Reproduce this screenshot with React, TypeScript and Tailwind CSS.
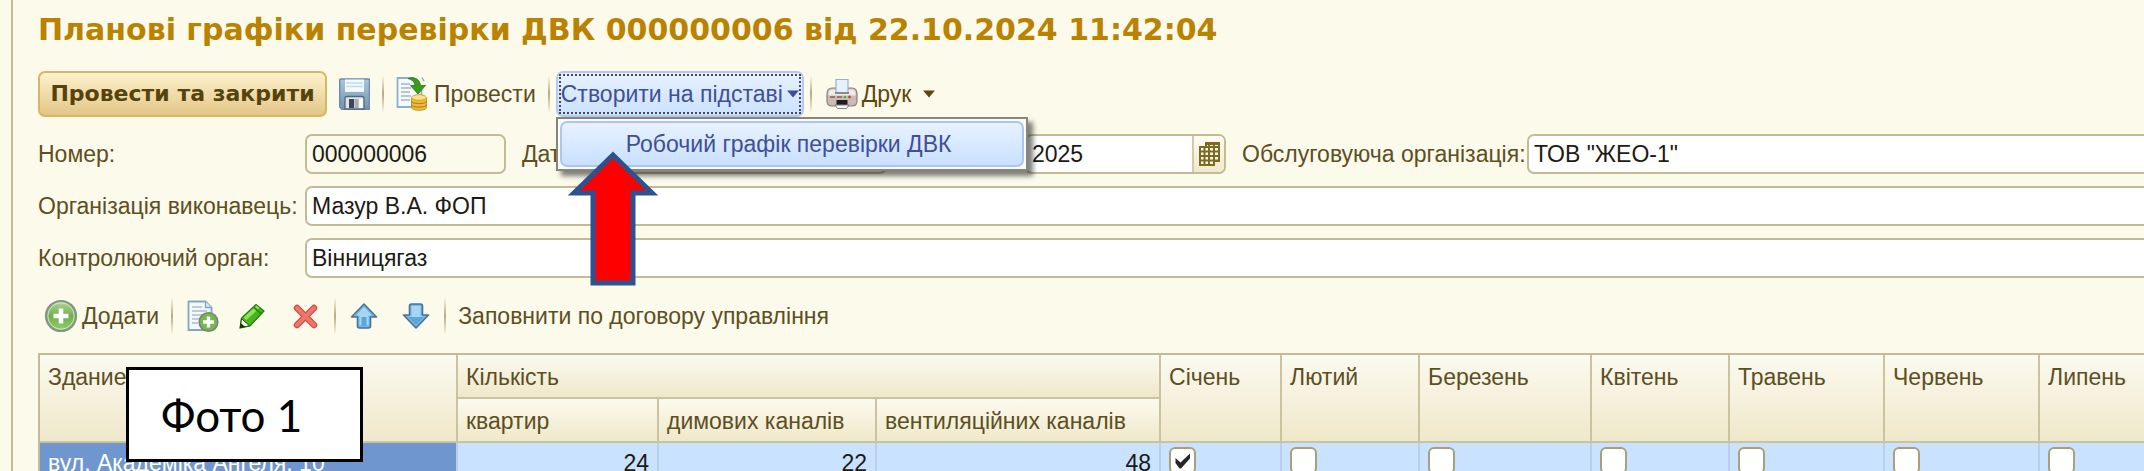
import { useState } from "react";

const months = ["Січень", "Лютий", "Березень", "Квітень", "Травень", "Червень", "Липень"];

const headCell = "border-r-2 border-b-2 border-[#cbc39f] bg-linear-to-b from-[#fbfaf0] to-[#f0e8ca] pt-2 pl-2 text-left align-top font-normal";
const field = "h-10 rounded-[7px] border-2 border-[#c3bb96] px-[5px] text-[#1c1a14] outline-none";

function Separator() {
  return <span className="h-[38px] w-0.5 bg-linear-to-b from-transparent via-[#b5ab84] to-transparent" />;
}

function Caret() {
  return (
    <svg className="h-2 w-3" viewBox="0 0 12 8" fill="currentColor" aria-hidden="true">
      <path d="M0 0.5h12L6 7.5z" />
    </svg>
  );
}

function SaveIcon() {
  return (
    <svg className="h-8 w-[31px]" viewBox="0 0 31 32" aria-hidden="true">
      <defs>
        <linearGradient id="save-body" x1="0" y1="0" x2="0" y2="1">
          <stop offset="0" stopColor="#a9c8df" />
          <stop offset="1" stopColor="#7292ad" />
        </linearGradient>
      </defs>
      <path d="M2 1h27.500q1 0 1 1v28.500q0 1-1 1H3L.7 29V2q0-1 1.300-1z" fill="url(#save-body)" stroke="#6c8aa5" strokeWidth="1.400" />
      <path d="M6 1.500h19V14H6z" fill="#f4fbfe" />
      <path d="M7 5h17M7 8.500h17" stroke="#b9dcf0" strokeWidth="1.500" />
      <path d="M5 14.500h21" stroke="#8fb0ca" strokeWidth="1.200" />
      <path d="M6 20.500q0-2 2-2h15q2 0 2 2V31H6z" fill="#dfe3e8" stroke="#53677c" strokeWidth="1.300" />
      <path d="M10 21h5v9h-5z" fill="#3c4654" />
      <path d="M15.500 21h4v9h-4z" fill="#a7adb5" />
      <path d="M20.500 21h3v9h-3z" fill="#fff" />
    </svg>
  );
}

function PostIcon() {
  return (
    <svg className="h-9 w-8" viewBox="0 0 32 36" aria-hidden="true">
      <path d="M18 2H1.500v29h24V14" fill="#f3f8fc" stroke="#8db0cd" strokeWidth="1.800" />
      <path d="M5 8h9M5 12h10M5 16h9M5 20h10M5 24h9" stroke="#a9b4c2" strokeWidth="1.500" />
      <path d="M26 1.500l2 4" stroke="#8db0cd" strokeWidth="1.500" />
      <path d="M12 2.500c6-1.800 11.500 0 12.500 7h5L22 18l-7.500-8.500h4.500c-.5-4-3-6-7-7z" fill="#3c9a1e" stroke="#27740f" strokeWidth=".8" />
      <path d="M15.500 22v9.500c0 3.800 15 3.800 15 0V22z" fill="#eebc3c" stroke="#bb8a1c" strokeWidth=".8" />
      <ellipse cx="23" cy="21.500" rx="7.500" ry="2.800" fill="#fbe28a" stroke="#c99726" strokeWidth=".8" />
      <path d="M15.500 25c0 3.400 15 3.400 15 0M15.500 28.500c0 3.400 15 3.400 15 0" fill="none" stroke="#b98619" strokeWidth="1.200" />
    </svg>
  );
}

function PrinterIcon() {
  return (
    <svg className="h-8 w-8" viewBox="0 0 32 32" aria-hidden="true">
      <path d="M1 16q0-6 5-6h20q5 0 5 6v7q0 5-5 5H6q-5 0-5-5z" fill="#c9bcb4" stroke="#8b807a" strokeWidth="1.200" />
      <path d="M2.500 15.500q0-4 4-4h19q4 0 4 4v2h-27z" fill="#f1ebe6" />
      <path d="M10 1.500h12V15H10z" fill="#e4f2fc" stroke="#96b3ca" strokeWidth="1.200" />
      <path d="M9 15h14" stroke="#77706c" strokeWidth="1.500" />
      <path d="M4 19h5M11 19h5" stroke="#9c7767" strokeWidth="2" />
      <circle cx="19" cy="19" r="1.300" fill="#3fae46" />
      <circle cx="23.500" cy="19" r="1.400" fill="#e23c30" />
      <path d="M10.500 22h11v5h-11z" fill="#211d1c" />
      <path d="M9 27h14l-2.500 3.500h-9z" fill="#fafafa" stroke="#85807d" strokeWidth="1" />
    </svg>
  );
}

function AddIcon() {
  return (
    <svg className="h-[34px] w-[34px]" viewBox="0 0 34 34" aria-hidden="true">
      <defs>
        <linearGradient id="add-ball" x1="0" y1="0" x2="0" y2="1">
          <stop offset="0" stopColor="#b5d79e" />
          <stop offset=".5" stopColor="#6fb04a" />
          <stop offset="1" stopColor="#95cd70" />
        </linearGradient>
      </defs>
      <circle cx="17" cy="17" r="15" fill="url(#add-ball)" stroke="#87948a" strokeWidth="2.200" />
      <circle cx="17" cy="17" r="13.200" fill="none" stroke="#cfe6c2" strokeWidth="1" />
      <path d="M17 9.500v15M9.500 17h15" stroke="#fff" strokeWidth="4.500" />
    </svg>
  );
}

function CopyIcon() {
  return (
    <svg className="h-[34px] w-8" viewBox="0 0 32 34" aria-hidden="true">
      <path d="M1.500 2.500h17l6 6V31h-23z" fill="#f2f8fd" stroke="#84a5c1" strokeWidth="1.800" />
      <path d="M18.500 2.500v6h6" fill="#d8e8f4" stroke="#84a5c1" strokeWidth="1.300" />
      <path d="M5 8h10M5 12h15M5 16h15M5 20h8M5 24h6" stroke="#aebdcb" strokeWidth="1.400" />
      <circle cx="21.500" cy="23" r="9.300" fill="#76b552" stroke="#75886f" strokeWidth="1.600" />
      <path d="M21.500 17.500v11M16 23h11" stroke="#fff" strokeWidth="3.400" />
    </svg>
  );
}

function PencilIcon() {
  return (
    <svg className="h-[26px] w-[26px]" viewBox="0 0 26 26" aria-hidden="true">
      <path d="M1 25l1.500-10L17 1.500 25 8 11 23z" fill="#46b51e" stroke="#23780a" strokeWidth="1.200" />
      <path d="M4.500 14.500L17.500 2.500l3 2.500L7.500 17z" fill="#8fe05e" />
      <path d="M14.500 4l8 7" stroke="#2c8a10" strokeWidth="1.800" />
      <path d="M1.300 24.700l1.200-9 8 7z" fill="#f5f7ec" stroke="#23570f" strokeWidth="1" />
      <path d="M1 25l.6-5 4.500 3.800z" fill="#15330c" />
    </svg>
  );
}

function DeleteIcon() {
  return (
    <svg className="h-[25px] w-[25px]" viewBox="0 0 25 25" aria-hidden="true">
      <path d="M4 4l17 17M21 4L4 21" stroke="#cf4a44" strokeWidth="6.500" strokeLinecap="round" />
      <path d="M4 4l17 17M21 4L4 21" stroke="#ee7768" strokeWidth="4" strokeLinecap="round" />
    </svg>
  );
}

function MoveUpIcon() {
  return (
    <svg className="h-[26px] w-7" viewBox="0 0 28 26" aria-hidden="true">
      <path d="M14 1l12.500 13h-6v9q0 2-2 2h-9q-2 0-2-2v-9h-6z" fill="#72b8e8" stroke="#4b7291" strokeWidth="1.600" strokeLinejoin="round" />
      <path d="M14 4l8 8.500h-3.500V22h-9v-9.500H6z" fill="#a5d6f6" />
      <path d="M11.500 14h5v9h-5z" fill="#5aa7de" />
    </svg>
  );
}

function MoveDownIcon() {
  return (
    <svg className="h-[26px] w-7" viewBox="0 0 28 26" aria-hidden="true">
      <path d="M14 25L1.500 12h6V3q0-2 2-2h9q2 0 2 2v9h6z" fill="#72b8e8" stroke="#4b7291" strokeWidth="1.600" strokeLinejoin="round" />
      <path d="M9.500 3h9v10.500H22L14 21 6 13.500h3.500z" fill="#a5d6f6" />
      <path d="M6 14h16l-8 8z" fill="#5aa7de" />
    </svg>
  );
}

function PickerIcon() {
  return (
    <svg className="h-6 w-[21px]" viewBox="0 0 21 24" aria-hidden="true">
      <path d="M7 1h13v18h-5v4H1V5h6z" fill="#fbf8e4" stroke="#7d6a22" strokeWidth="2" />
      <path d="M7 2h13M7 5h13M1 9.500h19M1 14h19M1 18.500h19M5.500 5v18M10 1v22M15 1v22" stroke="#7d6a22" strokeWidth="2" />
    </svg>
  );
}

export default function App() {
  const [checked, setChecked] = useState<string[]>(["Січень"]);

  const toggle = (month: string) =>
    setChecked((prev) => (prev.includes(month) ? prev.filter((m) => m !== month) : [...prev, month]));

  return (
    <div className="h-dvh overflow-hidden bg-[#fcfaeb] pl-[11px] font-['Liberation_Sans',Arial,sans-serif] text-[23px] leading-7 text-[#5c4f22]">
      <main className="min-h-full border-l-2 border-[#c3bb96] pl-[25px]">
        <h1 className="h-[71px] pt-2 font-['DejaVu_Sans',sans-serif] text-3xl leading-11 font-bold whitespace-nowrap text-[#b98200]">
          Планові графіки перевірки ДВК 000000006 від 22.10.2024 11:42:04
        </h1>

        <div className="flex h-[46px] items-center whitespace-nowrap">
          <button
            type="button"
            className="h-full w-[289px] rounded-[7px] border-2 border-[#d6b765] bg-linear-to-b from-[#fdf2cc] to-[#e3c687] font-['DejaVu_Sans',sans-serif] text-[22px] leading-7 font-bold text-[#55430e]"
          >
            Провести та закрити
          </button>
          <button type="button" aria-label="Записати" className="mx-3">
            <SaveIcon />
          </button>
          <Separator />
          <button type="button" className="mx-3 flex items-center gap-1.5">
            <PostIcon />
            Провести
          </button>
          <Separator />
          <div className="relative mx-1.5 h-full">
            <button
              type="button"
              aria-expanded="true"
              className="h-full w-[248px] rounded-[7px] border-2 border-[#b2c8f5] bg-linear-to-b from-[#e6f1ff] to-[#cbe2ff] p-px text-[#404f98]"
            >
              <span className="flex h-full items-center justify-between border-2 border-dotted border-[#4a4a4a]">
                Створити на підставі
                <Caret />
              </span>
            </button>
            <div
              role="menu"
              className="absolute top-full left-0 z-10 h-[54px] w-[472px] border-2 border-[#85857f] bg-[#fdfcf3] p-0.5 shadow-[5px_5px_5px_rgba(0,0,0,0.5)]"
            >
              <button
                type="button"
                role="menuitem"
                className="h-full w-full rounded-[7px] border-2 border-[#aec5f4] bg-linear-to-b from-[#e8f2ff] to-[#c9e0ff] pl-16 text-left text-[#404f98]"
              >
                Робочий графік перевірки ДВК
              </button>
            </div>
            <svg className="absolute top-20 left-3 z-20 h-[135px] w-[90px]" viewBox="0 0 90 135" aria-hidden="true">
              <path d="M45 4L84 42H65v90H25V42H6z" fill="#fe0000" stroke="#2f528f" strokeWidth="5" />
            </svg>
          </div>
          <Separator />
          <button type="button" className="ml-3.5 flex items-center gap-1 text-[#5c480c]">
            <PrinterIcon />
            Друк
            <span className="pl-2">
              <Caret />
            </span>
          </button>
        </div>

        <form className="mt-[17px] -mr-2 space-y-3 whitespace-nowrap">
          <div className="flex items-center">
            <label htmlFor="number" className="w-[267px]">Номер:</label>
            <input id="number" readOnly defaultValue="000000006" className={`${field} w-[201px] bg-[#fcfaeb]`} />
            <label htmlFor="date" className="w-[86px] pl-4">Дата:</label>
            <input id="date" className={`${field} w-[295px] bg-white`} />
            <div className="ml-[138px] flex h-10 w-[201px] overflow-hidden rounded-[7px] border-2 border-[#c3bb96] bg-white">
              <input aria-label="Рік" defaultValue="2025" className="min-w-0 flex-1 pl-[5px] text-[#1c1a14] outline-none" />
              <button
                type="button"
                aria-label="Вибрати"
                className="flex w-8 items-center justify-center border-l-2 border-[#d3cba8] bg-linear-to-b from-[#fdfcf0] to-[#efe9cc]"
              >
                <PickerIcon />
              </button>
            </div>
            <label htmlFor="service" className="w-[301px] pl-4">Обслуговуюча організація:</label>
            <input id="service" defaultValue={'ТОВ "ЖЕО-1"'} className={`${field} min-w-0 flex-1 bg-white`} />
          </div>
          <div className="flex items-center">
            <label htmlFor="contractor" className="w-[267px]">Організація виконавець:</label>
            <input id="contractor" defaultValue="Мазур В.А. ФОП" className={`${field} min-w-0 flex-1 bg-white`} />
          </div>
          <div className="flex items-center">
            <label htmlFor="control" className="w-[267px]">Контролюючий орган:</label>
            <input id="control" defaultValue="Вінницягаз" className={`${field} min-w-0 flex-1 bg-white`} />
          </div>
        </form>

        <div className="mt-4 flex h-11 items-center whitespace-nowrap">
          <button type="button" className="mr-3 ml-1.5 flex items-center gap-1">
            <AddIcon />
            Додати
          </button>
          <Separator />
          <button type="button" aria-label="Скопіювати" className="mr-5 ml-3.5">
            <CopyIcon />
          </button>
          <button type="button" aria-label="Змінити">
            <PencilIcon />
          </button>
          <button type="button" aria-label="Видалити" className="mr-4 ml-7">
            <DeleteIcon />
          </button>
          <Separator />
          <button type="button" aria-label="Вгору" className="mr-6 ml-3.5">
            <MoveUpIcon />
          </button>
          <button type="button" aria-label="Вниз" className="mr-3.5">
            <MoveDownIcon />
          </button>
          <Separator />
          <button type="button" className="ml-3">Заповнити по договору управління</button>
        </div>

        <div className="relative mt-[15px]">
          <table className="w-full table-fixed border-separate border-spacing-0 border-t-2 border-l-2 border-[#c3bb96] whitespace-nowrap">
            <colgroup>
              <col className="w-[418px]" />
              <col className="w-[201px]" />
              <col className="w-[218px]" />
              <col className="w-[284px]" />
              <col className="w-[121px]" />
              <col className="w-[138px]" />
              <col className="w-[172px]" />
              <col className="w-[138px]" />
              <col className="w-[155px]" />
              <col className="w-[155px]" />
              <col />
            </colgroup>
            <thead>
              <tr className="h-11">
                <th rowSpan={2} className={headCell}>Здание</th>
                <th colSpan={3} className={headCell}>Кількість</th>
                {months.map((m) => (
                  <th key={m} rowSpan={2} className={`${headCell} last:border-r-0`}>{m}</th>
                ))}
              </tr>
              <tr className="h-11">
                <th className={headCell}>квартир</th>
                <th className={headCell}>димових каналів</th>
                <th className={headCell}>вентиляційних каналів</th>
              </tr>
            </thead>
            <tbody>
              <tr className="h-10 bg-[#c9e2ff] text-[#1c1a14]">
                <td className="border-r-2 border-[#b9cfe8] bg-[#6f96cf] pl-2 text-white">вул. Академіка Ангеля, 10</td>
                <td className="border-r-2 border-[#b9cfe8] pr-2 text-right">24</td>
                <td className="border-r-2 border-[#b9cfe8] pr-2 text-right">22</td>
                <td className="border-r-2 border-[#b9cfe8] pr-2 text-right">48</td>
                {months.map((m) => (
                  <td key={m} className="border-r-2 border-[#b9cfe8] pt-1 pl-2 align-top last:border-r-0">
                    <label className="relative block size-[27px]">
                      <input
                        type="checkbox"
                        aria-label={m}
                        checked={checked.includes(m)}
                        onChange={() => toggle(m)}
                        className="block size-full appearance-none rounded-md border-2 border-[#a9a07a] bg-white"
                      />
                      {checked.includes(m) && (
                        <svg className="pointer-events-none absolute inset-0 size-full" viewBox="0 0 27 27" aria-hidden="true">
                          <path d="M6.500 11l5 4.500 9.500-9v5l-9 10h-1.500l-4-5.500z" fill="#26262a" />
                        </svg>
                      )}
                    </label>
                  </td>
                ))}
              </tr>
            </tbody>
          </table>
          <div className="absolute top-3.5 left-[88px] flex h-[95px] w-[237px] items-center border-3 border-black bg-white pl-8 font-['Lato',sans-serif] text-[44px] text-black">
            Фото 1
          </div>
        </div>
      </main>
    </div>
  );
}
